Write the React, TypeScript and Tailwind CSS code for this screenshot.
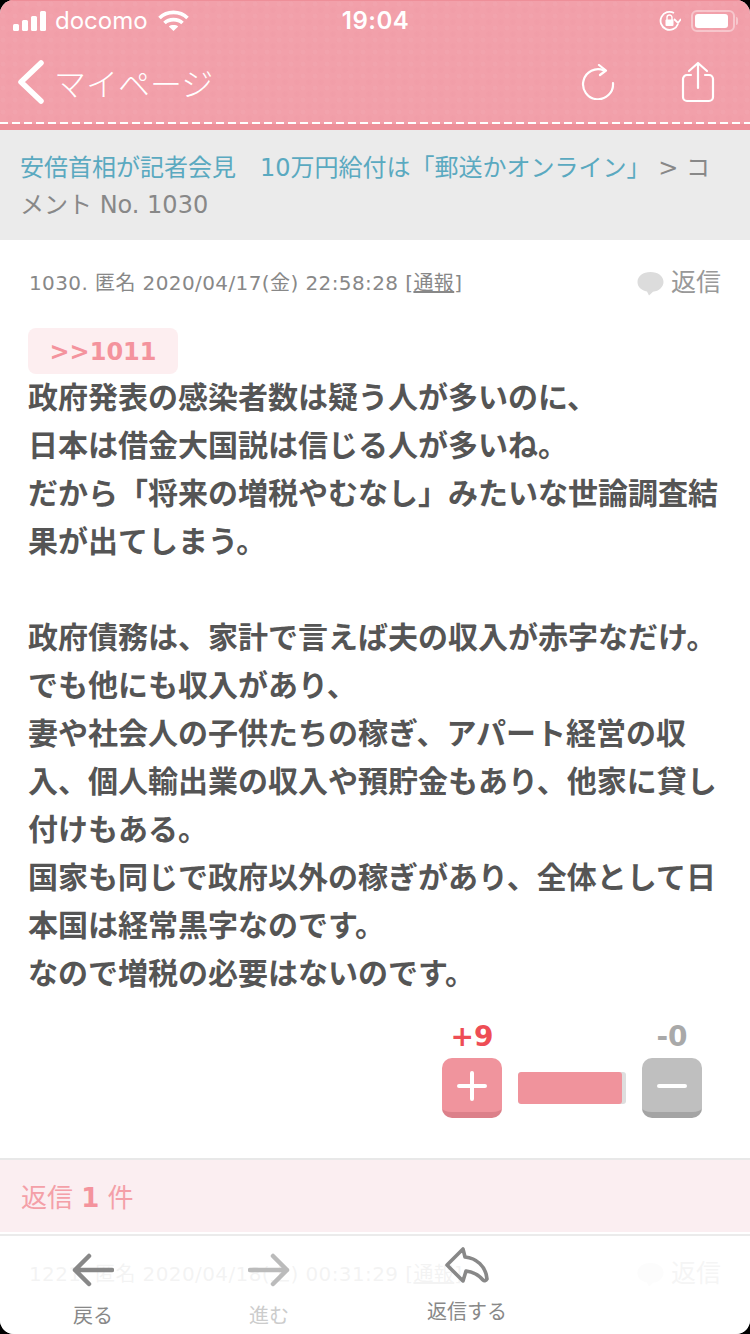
import React from 'react';

const jp = 'font-["DejaVu_Sans","Noto_Sans_CJK_JP",sans-serif]';

const lines = [
  '政府発表の感染者数は疑う人が多いのに、',
  '日本は借金大国説は信じる人が多いね。',
  'だから「将来の増税やむなし」みたいな世論調査結果が出てしまう。',
  '',
  '政府債務は、家計で言えば夫の収入が赤字なだけ。',
  'でも他にも収入があり、',
  '妻や社会人の子供たちの稼ぎ、アパート経営の収入、個人輸出業の収入や預貯金もあり、他家に貸し付けもある。',
  '国家も同じで政府以外の稼ぎがあり、全体として日本国は経常黒字なのです。',
  'なので増税の必要はないのです。',
];

const StatusBar = () => (
  <div className="flex h-10 items-center justify-between pl-[13px] pr-[12px] text-white">
    <div className="flex w-[240px] items-center">
      <svg width="34" height="20" viewBox="0 0 34 20" fill="#fff">
        <rect x="0" y="13" width="6" height="7" rx="1.5" />
        <rect x="9" y="9" width="6" height="11" rx="1.5" />
        <rect x="18" y="5" width="6" height="15" rx="1.5" />
        <rect x="27" y="0" width="6" height="20" rx="1.5" />
      </svg>
      <span className='ml-[8px] font-["Inter",sans-serif] text-[24px] leading-none'>docomo</span>
      <svg className="ml-[10px]" width="31" height="22" viewBox="0 0 31 22" fill="none" stroke="#fff" strokeWidth="3.6">
        <path d="M1.5 8 C9 0.5 22 0.5 29.5 8" />
        <path d="M6.5 13 C11 8.5 20 8.5 24.5 13" />
        <path d="M15.5 21 L10.8 16.5 C13 14.6 18 14.6 20.2 16.5 Z" fill="#fff" stroke="none" />
      </svg>
    </div>
    <span className='font-["Inter",sans-serif] text-[24px] font-semibold leading-none tracking-[0.5px]'>19:04</span>
    <div className="flex w-[240px] items-center justify-end">
      <svg width="22" height="22" viewBox="0 0 22 22" fill="none" stroke="#fff" strokeWidth="1.8">
        <path d="M19 14 A9 9 0 1 1 15 3" />
        <path d="M15 9 L19 13 L22 9" />
        <rect x="6.5" y="9.5" width="8" height="6.5" rx="1" fill="#fff" stroke="none" />
        <path d="M8 10 V7.5 A2.5 2.5 0 0 1 13 7.5 V10" strokeWidth="1.4" />
      </svg>
      <div className="ml-[10px] flex h-[22px] w-[44px] items-center rounded-[6px] border-2 border-white/40 p-[2px]">
        <div className="h-full w-[33px] rounded-[3px] bg-white" />
      </div>
      <div className="ml-[1px] h-[8px] w-[2px] rounded-r bg-white/40" />
    </div>
  </div>
);

const Header = () => (
  <header className="h-[130px] border-t border-[#ee8f99] bg-[#f2a0aa] bg-[radial-gradient(circle_at_3px_3px,rgba(255,255,255,0.03)_2px,transparent_3px),radial-gradient(circle_at_9px_9px,rgba(220,90,110,0.03)_2px,transparent_3px)] bg-[length:12px_12px]">
    <StatusBar />
    <div className="flex h-[81px] items-center pl-[18px] pr-[35px] text-white">
      <svg width="26" height="44" viewBox="0 0 26 44" fill="none" stroke="#fff" strokeWidth="5.5" strokeLinecap="round" strokeLinejoin="round">
        <path d="M23 3 L3 22 L23 41" />
      </svg>
      <span className='ml-[10px] font-["Noto_Sans_CJK_JP",sans-serif] text-[32px] font-light leading-none'>マイページ</span>
      <div className="ml-auto flex items-center gap-[66px]">
        <svg width="34" height="36" viewBox="0 0 34 36" fill="none" stroke="#fff" strokeWidth="2.2" strokeLinecap="round" strokeLinejoin="round">
          <path d="M23 6.5 A15 15 0 1 0 32 19" />
          <path d="M18 1 L25 6.5 L19 11" />
        </svg>
        <svg width="34" height="42" viewBox="0 0 34 42" fill="none" stroke="#fff" strokeWidth="2.2" strokeLinecap="round" strokeLinejoin="round">
          <path d="M10 14 H6 A4 4 0 0 0 2 18 V36 A4 4 0 0 0 6 40 H28 A4 4 0 0 0 32 36 V18 A4 4 0 0 0 28 14 H24" />
          <path d="M17 27 V2 M8 10 L17 2 L26 10" />
        </svg>
      </div>
    </div>
    <div className="h-[2px] bg-[repeating-linear-gradient(90deg,#fff_0_8px,transparent_8px_12px)]" />
    <div className="h-[6px] bg-[#ee909a]" />
  </header>
);

const Breadcrumb = () => (
  <div className={`h-[110px] bg-[#ebebeb] pl-[20px] pr-[36px] pt-[20px] ${jp} text-[24px] leading-[37px] text-[#888]`}>
    <span className="text-[#5aa9c0]">安倍首相が記者会見　10万円給付は「郵送かオンライン」</span> &gt; コメント No. 1030
  </div>
);

const MetaRow = ({ text }: { text: React.ReactNode }) => (
  <div className={`flex items-center justify-between pl-[29px] pr-[29px] ${jp} text-[#888]`}>
    <span className="text-[20px] leading-[30px] tracking-[0.4px]">{text}</span>
    <span className="flex items-center text-[25px] leading-[30px] text-[#999]">
      <svg width="27" height="25" viewBox="0 0 27 25" fill="#dcdcdc" className="mr-[7px]">
        <path d="M13.5 1 C6 1 0.5 5 0.5 11 C0.5 16 4.5 19.5 10 20.5 L12 24.5 L16 20.8 C22 20 26.5 16 26.5 11 C26.5 5 21 1 13.5 1 Z" />
      </svg>
      返信
    </span>
  </div>
);

const VoteButton = ({ kind }: { kind: 'plus' | 'minus' }) => (
  <div
    className={
      kind === 'plus'
        ? 'flex h-[60px] w-[60px] items-center justify-center rounded-[10px] border-b-[6px] border-[#dc808a] bg-[#f0949d] pt-[2px]'
        : 'flex h-[60px] w-[60px] items-center justify-center rounded-[10px] border-b-[6px] border-[#a4a4a4] bg-[#bfbfbf] pt-[2px]'
    }
  >
    <svg width="30" height="30" viewBox="0 0 30 30" stroke="#fff" strokeWidth="4" strokeLinecap="round">
      <path d={kind === 'plus' ? 'M2 15 H28 M15 2 V28' : 'M2 15 H28'} />
    </svg>
  </div>
);

const Votes = () => (
  <div className={`mt-[20px] flex items-end justify-end gap-[16px] pr-[48px] ${jp} text-[28px] font-bold leading-[38px]`}>
    <div className="w-[60px] text-center text-[#ee4d55]">
      <div className="mb-[2px]">+9</div>
      <VoteButton kind="plus" />
    </div>
    <div className="mb-[14px] h-[32px] w-[108px] overflow-hidden rounded-[3px] bg-[#dedede]">
      <div className="h-full w-[104px] rounded-[3px] bg-[#f0939c]" />
    </div>
    <div className="w-[60px] text-center text-[#a9a9a9]">
      <div className="mb-[2px]">-0</div>
      <VoteButton kind="minus" />
    </div>
  </div>
);

const BottomNav = () => (
  <nav className={`absolute inset-x-0 bottom-0 flex h-[100px] border-t-2 border-[#ebebeb] bg-white/90 ${jp} text-[20px] leading-[30px]`}>
    <div className="ml-[53px] flex w-[80px] flex-col items-center pt-[17px] text-[#888]">
      <svg width="42" height="34" viewBox="0 0 42 34" fill="none" stroke="#888" strokeWidth="4.5" strokeLinecap="round" strokeLinejoin="round">
        <path d="M40 17 H3 M17 3 L3 17 L17 31" />
      </svg>
      <span className="mt-[14px]">戻る</span>
    </div>
    <div className="ml-[96px] flex w-[80px] flex-col items-center pt-[17px] text-[#ccc]">
      <svg width="42" height="34" viewBox="0 0 42 34" fill="none" stroke="#bbb" strokeWidth="4.5" strokeLinecap="round" strokeLinejoin="round">
        <path d="M2 17 H39 M25 3 L39 17 L25 31" />
      </svg>
      <span className="mt-[14px]">進む</span>
    </div>
    <div className="ml-[108px] flex w-[100px] flex-col items-center pt-[10px] text-[#888]">
      <svg width="44" height="38" viewBox="0 0 44 38" fill="none" stroke="#888" strokeWidth="3.6" strokeLinejoin="round" strokeLinecap="round">
        <path d="M2 19 L18 3 L20 11 C31 12 41 20 42 33 C41 35 39 35 38 34 C33 28 28 26 21 25 L18 35 Z" />
      </svg>
      <span className="mt-[13px]">返信する</span>
    </div>
  </nav>
);

export default function App() {
  return (
    <div className="h-[1334px] w-[750px] bg-black">
      <div className="relative h-full overflow-hidden rounded-[14px] bg-white">
        <Header />
        <Breadcrumb />
        <section className="pt-[28px]">
          <MetaRow text={<>1030. 匿名 2020/04/17(金) 22:58:28 [<span className="underline">通報</span>]</>} />
          <div className={`ml-[28px] mt-[30px] flex h-[46px] w-[150px] items-center justify-center rounded-[8px] bg-[#fdeef0] pt-[2px] ${jp} text-[24px] font-bold text-[#f4939d]`}>
            &gt;&gt;1011
          </div>
          <div className={`px-[28px] ${jp} text-[30px] font-bold leading-[48px] text-[#555]`}>
            {lines.map((line, i) => (
              <p key={i} className="min-h-[48px]">{line}</p>
            ))}
          </div>
          <Votes />
        </section>
        <div className={`mt-[40px] flex h-[74px] items-center border-t-2 border-[#e8e8e8] bg-[#fbeef1] pl-[21px] pt-[4px] ${jp} text-[26px] text-[#f4a0a8]`}>
          返信&nbsp;<span className="font-bold text-[#f4939d]">1</span>&nbsp;件
        </div>
        <div className="mt-[27px]">
          <MetaRow text={<>1221. 匿名 2020/04/18(土) 00:31:29 [<span className="underline">通報</span>]</>} />
        </div>
        <BottomNav />
      </div>
    </div>
  );
}
